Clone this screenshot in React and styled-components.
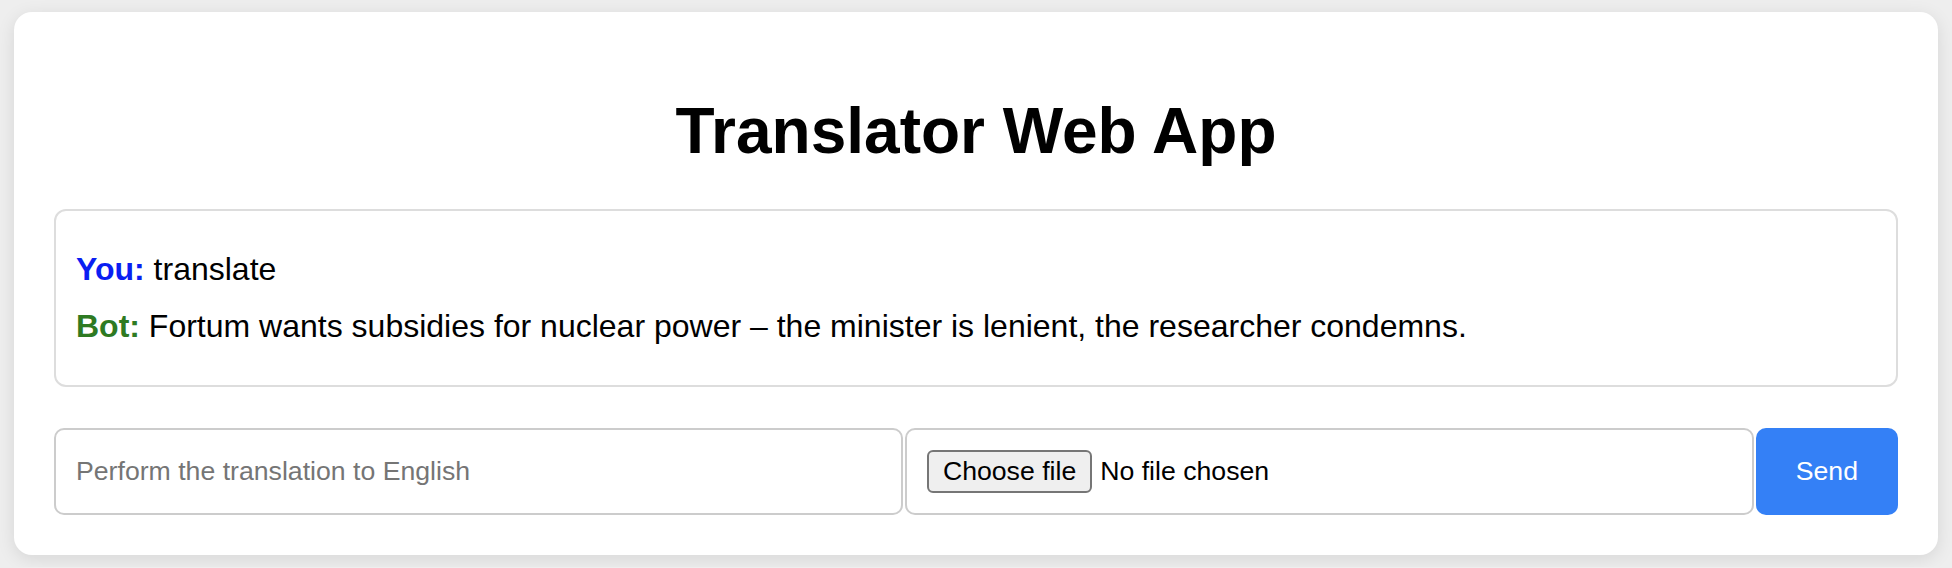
import React, { useState } from 'react';
import styled, { createGlobalStyle } from 'styled-components';

const GlobalStyle = createGlobalStyle`
  html, body {
    margin: 0;
    padding: 0;
    background: #eeeeee;
  }
  body {
    padding: 12px 14px;
    font-family: 'Liberation Sans', Arial, Helvetica, sans-serif;
  }
`;

const messages = [
  { from: 'You', text: 'translate' },
  {
    from: 'Bot',
    text: 'Fortum wants subsidies for nuclear power – the minister is lenient, the researcher condemns.',
  },
];

function App() {
  const [input, setInput] = useState('');
  const [fileName, setFileName] = useState('');

  return (
    <>
      <GlobalStyle />
      <Card>
        <Title>Translator Web App</Title>
        <ChatBox>
          {messages.map((m, i) => (
            <Message key={i}>
              <Sender who={m.from}>{m.from}:</Sender> {m.text}
            </Message>
          ))}
        </ChatBox>
        <InputRow>
          <TextInput
            type="text"
            placeholder="Perform the translation to English"
            value={input}
            onChange={(e) => setInput(e.target.value)}
          />
          <FilePicker>
            <HiddenFile
              type="file"
              onChange={(e) => setFileName(e.target.files[0]?.name || '')}
            />
            <ChooseButton>Choose file</ChooseButton>
            <FileName>{fileName || 'No file chosen'}</FileName>
          </FilePicker>
          <SendButton>Send</SendButton>
        </InputRow>
      </Card>
    </>
  );
}

export default App;

const Card = styled.div`
  background: #ffffff;
  border-radius: 18px;
  padding: 40px;
  box-shadow: 0 4px 18px rgba(0, 0, 0, 0.1);
`;

const Title = styled.h1`
  font-family: 'Liberation Sans', Arial, Helvetica, sans-serif;
  font-size: 64px;
  font-weight: bold;
  text-align: center;
  color: #000;
  margin: 42px 0 41px;
`;

const ChatBox = styled.div`
  border: 2px solid #dddddd;
  border-radius: 12px;
  padding: 20px;
  margin-bottom: 41px;
`;

const Message = styled.p`
  font-size: 32px;
  line-height: 37px;
  margin: 20px 0;
  color: #000;
`;

const Sender = styled.strong`
  color: ${({ who }) => (who === 'You' ? '#0a1ef2' : '#2e7a22')};
`;

const InputRow = styled.div`
  display: flex;
  gap: 2px;
`;

const TextInput = styled.input`
  flex: 1;
  min-width: 0;
  box-sizing: border-box;
  border: 2px solid #cccccc;
  border-radius: 10px;
  padding: 0 20px;
  font-family: 'Liberation Sans', Arial, Helvetica, sans-serif;
  font-size: 26.67px;
  color: #000;
  outline: none;

  &::placeholder {
    color: #757575;
  }
`;

const FilePicker = styled.label`
  flex: 1;
  min-width: 0;
  display: flex;
  align-items: center;
  box-sizing: border-box;
  border: 2px solid #cccccc;
  border-radius: 10px;
  padding: 20px;
  font-family: 'Liberation Sans', Arial, Helvetica, sans-serif;
  font-size: 26.67px;
  color: #000;
  cursor: pointer;
`;

const HiddenFile = styled.input`
  display: none;
`;

const ChooseButton = styled.span`
  display: inline-block;
  padding: 4px 14px;
  line-height: 31px;
  margin-right: 8px;
  border: 2px solid #767676;
  border-radius: 6px;
  background: #efefef;
  color: #000;
`;

const FileName = styled.span`
  white-space: nowrap;
  overflow: hidden;
  text-overflow: ellipsis;
`;

const SendButton = styled.button`
  border: none;
  border-radius: 10px;
  background: #3480f6;
  color: #ffffff;
  padding: 0 40px;
  font-family: 'Liberation Sans', Arial, Helvetica, sans-serif;
  font-size: 26.67px;
  cursor: pointer;
`;
